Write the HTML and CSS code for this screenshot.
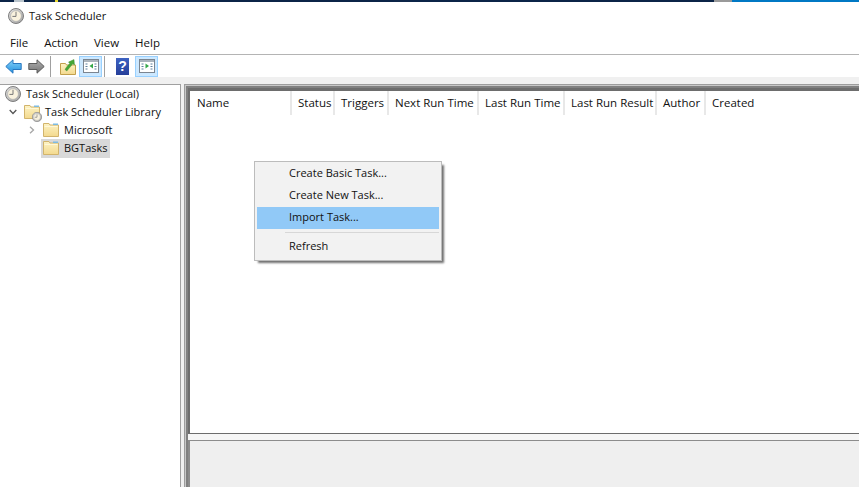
FILE: index.html
```html
<!DOCTYPE html>
<html lang="en">
<head>
  <meta charset="UTF-8" />
  <meta name="viewport" content="width=device-width, initial-scale=1.0" />
  <title>Task Scheduler</title>
  <link rel="stylesheet" href="styles.css">
</head>
<body>
  <svg class="defs" width="0" height="0">
    <defs>
      <linearGradient id="ring" x1="0" y1="0" x2="1" y2="1">
        <stop offset="0" stop-color="#e4e4e4" />
        <stop offset="1" stop-color="#a2a2a2" />
      </linearGradient>
      <linearGradient id="fold" x1="0" y1="0" x2="0" y2="1">
        <stop offset="0" stop-color="#fdf3c4" />
        <stop offset="1" stop-color="#f3d98e" />
      </linearGradient>
      <linearGradient id="blue" x1="0" y1="0" x2="0" y2="1">
        <stop offset="0" stop-color="#86d2f9" />
        <stop offset="1" stop-color="#2390de" />
      </linearGradient>
      <linearGradient id="grey" x1="0" y1="0" x2="0" y2="1">
        <stop offset="0" stop-color="#b0b0b0" />
        <stop offset="1" stop-color="#737373" />
      </linearGradient>
      <symbol id="clock" viewBox="0 0 16 16">
        <circle cx="8" cy="8" r="7.500" fill="url(#ring)" stroke="#7d7d7d" />
        <circle cx="8" cy="8" r="5.400" fill="#f9f2de" stroke="#a8a8a8" stroke-width=".6" />
        <path d="M8 3.800V8.400H4.400" fill="none" stroke="#777" stroke-width="1" />
      </symbol>
      <symbol id="folder" viewBox="0 0 16 16">
        <path d="M.5 1.500h5.500l1 1.500h8.500v11.500H.5z" fill="url(#fold)" stroke="#d2b46c" />
        <path d="M1.500 4.500h13" stroke="#fff8d8" />
        <path d="M10 1.500h5v1.500h-5z" fill="#7dbbe2" />
      </symbol>
      <symbol id="pane" viewBox="0 0 16 16">
        <rect x=".5" y="1.500" width="15" height="13" fill="#fff" stroke="#7b8590" />
        <path d="M1 2h14v2H1z" fill="#a9b3bd" />
        <path d="M2.500 6h2M2.500 8.500h2M2.500 11h2M11.500 6h2M11.500 8.500h2M11.500 11h2" stroke="#5d7f9e" stroke-width="1.200" />
      </symbol>
    </defs>
  </svg>

  <div class="topstrip"></div>

  <header class="titlebar">
    <svg class="icon16"><use href="#clock" /></svg>
    <span>Task Scheduler</span>
  </header>

  <nav class="menubar">
    <span>File</span>
    <span>Action</span>
    <span>View</span>
    <span>Help</span>
  </nav>

  <div class="toolbar">
    <svg class="arrow" viewBox="0 0 17 15"><path d="M8 .8.800 7.500 8 14.200v-3.700h8.200v-6H8z" fill="url(#blue)" stroke="#2a78c0" /></svg>
    <svg class="arrow arrow-next" viewBox="0 0 17 15"><path d="M9 .8l7.200 6.700L9 14.200v-3.700H.8v-6H9z" fill="url(#grey)" stroke="#5c5c5c" /></svg>
    <i class="sep sep-first"></i>
    <svg class="tool-up" viewBox="0 0 16 17">
      <path d="M.5 5.500h5l1 1.500h9v9.500H.5z" fill="url(#fold)" stroke="#c2a04c" />
      <path d="M5 11.500C6.500 9 8 7 9.800 5.500L8.500 4 14 1.500 14.500 7 12.800 5.800C11 8 9 10.500 6.800 13z" fill="#46a636" stroke="#37872b" stroke-width=".4" />
    </svg>
    <button class="tool on tool-tree">
      <svg class="icon16"><use href="#pane" /><path d="M10 5.500 6.500 8 10 10.500z" fill="#35a84a" /></svg>
    </button>
    <i class="sep"></i>
    <span class="help">?</span>
    <button class="tool on">
      <svg class="icon16"><use href="#pane" /><path d="M6.500 5.500 10 8l-3.500 2.500z" fill="#35a84a" /></svg>
    </button>
  </div>

  <main class="workspace">
    <aside class="tree">
      <div class="tree-row">
        <svg class="icon16"><use href="#clock" /></svg>
        <span class="tree-text tree-root">Task Scheduler (Local)</span>
      </div>
      <div class="tree-row level1">
        <svg class="chevron" viewBox="0 0 8 6"><path d="M.7 1 4 4.500 7.300 1" fill="none" stroke="#555" stroke-width="1.300" /></svg>
        <span class="lib-icon">
          <svg class="icon16"><use href="#folder" /></svg>
          <svg class="badge"><use href="#clock" /></svg>
        </span>
        <span class="tree-text">Task Scheduler Library</span>
      </div>
      <div class="tree-row level2">
        <svg class="chevron-side" viewBox="0 0 6 8"><path d="M1 .7 4.500 4 1 7.300" fill="none" stroke="#a6a6a6" stroke-width="1.300" /></svg>
        <svg class="icon16"><use href="#folder" /></svg>
        <span class="tree-text tree-label">Microsoft</span>
      </div>
      <div class="tree-row level3">
        <div class="selected">
          <svg class="icon16"><use href="#folder" /></svg>
          <span class="tree-text tree-label">BGTasks</span>
        </div>
      </div>
    </aside>

    <section class="content">
      <div class="results">
        <div class="columns">
          <span>Name</span>
          <span>Status</span>
          <span>Triggers</span>
          <span>Next Run Time</span>
          <span>Last Run Time</span>
          <span>Last Run Result</span>
          <span>Author</span>
          <span>Created</span>
        </div>
      </div>
      <div class="divider"></div>
      <div class="preview"></div>
    </section>
  </main>

  <ul class="context-menu">
    <li>Create Basic Task...</li>
    <li>Create New Task...</li>
    <li class="active">Import Task...</li>
    <li class="menu-sep"></li>
    <li>Refresh</li>
  </ul>
</body>
</html>
```

FILE: styles.css
```css
* {
  box-sizing: border-box;
}

html, body {
  height: 100%;
}

body {
  margin: 0;
  display: flex;
  flex-direction: column;
  overflow: hidden;
  background: #fff;
  color: #111;
  font-family: 'Open Sans', Roboto, sans-serif;
  font-size: 11px;
}

.defs {
  position: absolute;
}

.icon16 {
  width: 16px;
  height: 16px;
  flex: none;
}

.topstrip {
  height: 2px;
  flex: none;
  background: linear-gradient(90deg,
    #0b2447 0, #0b2447 14px, #b9c4cc 14px, #b9c4cc 24px, #0b2447 24px,
    #0b2447 55px, #e8d832 55px, #e8d832 58px, #0b2447 58px,
    #0b2447 714px, #9a9a9a 714px, #9a9a9a 732px, #0078c4 732px);
}

.titlebar {
  height: 31px;
  flex: none;
  display: flex;
  align-items: center;
  gap: 5px;
  padding: 0 0 3px 8px;
}

.titlebar span {
  margin-bottom: 1px;
}

.menubar {
  height: 22px;
  flex: none;
  display: flex;
  align-items: center;
  gap: 16px;
  padding: 0 0 3px 10px;
  border-bottom: 1px solid #b4b4b4;
  font-size: 11.500px;
}

.toolbar {
  height: 22px;
  flex: none;
  display: flex;
  align-items: center;
  padding-left: 5px;
}

.arrow {
  width: 17px;
  height: 15px;
}

.arrow-next {
  margin-left: 6px;
}

.sep {
  width: 1px;
  height: 21px;
  background: #a0a0a0;
  margin: 0 2px;
}

.sep-first {
  margin: 0 9px 0 5px;
}

.tool-up {
  width: 16px;
  height: 17px;
  margin-right: 3px;
}

.tool {
  width: 23px;
  height: 21px;
  padding: 0;
  display: flex;
  align-items: center;
  justify-content: center;
  border: 1px solid transparent;
  background: none;
}

.tool.on {
  background: #cce8ff;
  border-color: #99d1ff;
}

.help {
  width: 13px;
  height: 17px;
  margin: 0 6px 0 9px;
  background: linear-gradient(#3d62c2, #263f9a);
  color: #fff;
  font: bold 14px/17px 'Liberation Sans', sans-serif;
  text-align: center;
}

.workspace {
  flex: 1;
  min-height: 0;
  display: flex;
  margin-top: 7px;
  background: #f0f0f0;
  box-shadow: 0 -7px 0 #f0f0f0;
}

.tree {
  width: 181px;
  flex: none;
  background: #fff;
  border: 1px solid #a0a0a0;
  border-left: none;
  border-bottom: none;
}

.tree-row {
  height: 18px;
  display: flex;
  align-items: center;
  white-space: nowrap;
}

.tree-text {
  margin-bottom: 1px;
}

.tree-row:first-child {
  padding-left: 5px;
}

.tree-root {
  margin-left: 5px;
}

.level1 {
  padding-left: 9px;
}

.chevron {
  width: 8px;
  height: 6px;
  flex: none;
}

.lib-icon {
  position: relative;
  width: 16px;
  height: 16px;
  margin: 0 5px 0 7px;
}

.badge {
  position: absolute;
  right: -2px;
  bottom: -2px;
  width: 10px;
  height: 10px;
}

.level2 {
  padding-left: 29px;
}

.chevron-side {
  width: 6px;
  height: 8px;
  margin-right: 8px;
  flex: none;
}

.tree-label {
  margin-left: 5px;
}

.level3 {
  padding-left: 41px;
}

.selected {
  width: 69px;
  height: 19px;
  display: flex;
  align-items: center;
  padding-left: 2px;
  background: #d9d9d9;
}

/* the grey stripes run along the top and the whole left side */
.content {
  flex: 1;
  min-width: 0;
  display: flex;
  flex-direction: column;
  margin-left: 3px;
  padding: 4px 0 0 4px;
  background: #f0f0f0;
  box-shadow: inset 1px 1px 0 #9c9c9c, inset 2px 2px 0 #c8c8c8, inset 4px 4px 0 #808080;
}

.results {
  flex: 1;
  background: #fff;
  border-style: solid;
  border-color: #6d6d6d;
  border-width: 3px 0 1px 2px;
}

.columns {
  display: grid;
  grid-template-columns: 102px 43px 54px 90px 86px 92px 49px 1fr;
  height: 24px;
  font-size: 11.500px;
}

.columns span {
  padding: 4px 0 0 6px;
  border-right: 2px solid #e8e8e8;
  white-space: nowrap;
}

.columns span:first-child {
  padding-left: 7px;
}

.columns span:last-child {
  border-right: none;
}

.divider {
  height: 7px;
  flex: none;
  background: #f6f6f6;
  border-bottom: 1px solid #8c8c8c;
}

.preview {
  height: 46px;
  flex: none;
  background: #efefef;
  border-left: 2px solid #8c8c8c;
}

.context-menu {
  position: absolute;
  left: 254px;
  top: 161px;
  width: 188px;
  height: 100px;
  margin: 0;
  padding: 1px 2px;
  list-style: none;
  background: #f2f2f2;
  border: 1px solid #bcbcbc;
  box-shadow: 3px 3px 2px -1px #707070;
}

.context-menu li {
  height: 22px;
  line-height: 20px;
  padding-left: 32px;
}

.context-menu .active {
  background: #91c9f7;
}

.context-menu .menu-sep {
  height: 7px;
  margin-left: 28px;
  padding: 0;
  background: linear-gradient(#d7d7d7, #d7d7d7) center 3px / 100% 1px no-repeat;
}
```
